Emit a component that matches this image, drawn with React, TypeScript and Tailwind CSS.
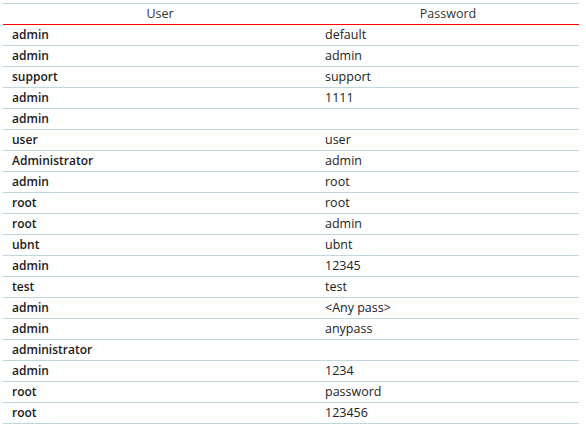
const rows: [string, string][] = [
  ["admin", "default"],
  ["admin", "admin"],
  ["support", "support"],
  ["admin", "1111"],
  ["admin", ""],
  ["user", "user"],
  ["Administrator", "admin"],
  ["admin", "root"],
  ["root", "root"],
  ["root", "admin"],
  ["ubnt", "ubnt"],
  ["admin", "12345"],
  ["test", "test"],
  ["admin", "<Any pass>"],
  ["admin", "anypass"],
  ["administrator", ""],
  ["admin", "1234"],
  ["root", "password"],
  ["root", "123456"],
];

export default function App() {
  return (
    <div className="bg-white w-[586px] h-[433px] pt-[3px] pl-[3px]" style={{ fontFamily: '"Open Sans", "Noto Sans", sans-serif' }}>
      <div className="w-[576px] border-t border-[#bfd7dd] text-[12.5px] text-[#222]">
        <div className="grid grid-cols-[314px_262px] h-[21px] border-b border-[#ff0000] items-center text-[#333]">
          <div className="text-center">User</div>
          <div className="text-center">Password</div>
        </div>
        {rows.map(([u, p], i) => (
          <div key={i} className="grid grid-cols-[314px_262px] h-[21px] border-b border-[#bfd7dd] items-center">
            <div className="pl-[9px] font-semibold text-[12px] text-[#1a1a1a]">{u}</div>
            <div className="pl-[8px]">{p}</div>
          </div>
        ))}
      </div>
    </div>
  );
}
